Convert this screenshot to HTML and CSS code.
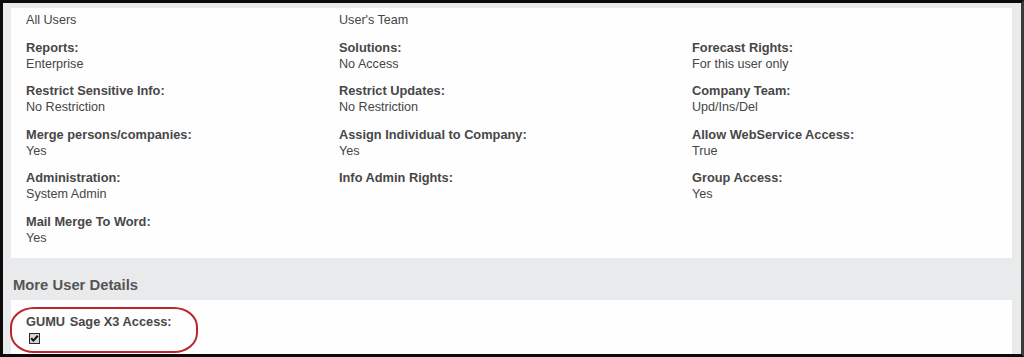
FILE: index.html
```html
<html lang="en">
  <head>
    <meta charset="UTF-8">
    <title>User Details</title>
    <link rel="stylesheet" href="styles.css">
  </head>
  <body>
    <div class="frame">
      <section class="panel">
        <div class="fields">
          <div class="field"><span class="value">All Users</span></div>
          <div class="field"><span class="value">User's Team</span></div>
          <div class="field"></div>

          <div class="field"><span class="label">Reports:</span><span class="value">Enterprise</span></div>
          <div class="field"><span class="label">Solutions:</span><span class="value">No Access</span></div>
          <div class="field"><span class="label">Forecast Rights:</span><span class="value">For this user only</span></div>

          <div class="field"><span class="label">Restrict Sensitive Info:</span><span class="value">No Restriction</span></div>
          <div class="field"><span class="label">Restrict Updates:</span><span class="value">No Restriction</span></div>
          <div class="field"><span class="label">Company Team:</span><span class="value">Upd/Ins/Del</span></div>

          <div class="field"><span class="label">Merge persons/companies:</span><span class="value">Yes</span></div>
          <div class="field"><span class="label">Assign Individual to Company:</span><span class="value">Yes</span></div>
          <div class="field"><span class="label">Allow WebService Access:</span><span class="value">True</span></div>

          <div class="field"><span class="label">Administration:</span><span class="value">System Admin</span></div>
          <div class="field"><span class="label">Info Admin Rights:</span></div>
          <div class="field"><span class="label">Group Access:</span><span class="value">Yes</span></div>

          <div class="field"><span class="label">Mail Merge To Word:</span><span class="value">Yes</span></div>
        </div>
      </section>

      <h2 class="section-title">More User Details</h2>

      <section class="panel panel-more">
        <div class="field">
          <span class="label">GUMU <span class="wide">Sage</span> X3 Access:</span>
          <span class="check">
            <svg width="11" height="11" viewBox="0 0 11 11">
              <rect x="0.5" y="0.5" width="10" height="10" fill="#d4d4d4" stroke="#2a2a2a"/>
              <path d="M2.2 5.2 L4.4 7.6 L8.8 2.8" fill="none" stroke="#111" stroke-width="2"/>
            </svg>
          </span>
        </div>
        <div class="highlight"></div>
      </section>
    </div>
  </body>
</html>
```

FILE: styles.css
```css
* {
  margin: 0;
  padding: 0;
  box-sizing: border-box;
}

body {
  width: 1024px;
  height: 357px;
  overflow: hidden;
  font-family: "Liberation Sans", Arial, sans-serif;
  color: #444;
}

.frame {
  height: 357px;
  display: flex;
  flex-direction: column;
  padding-top: 5px;
  background-color: #e9eaec;
  border-top: 3px solid #0b0b0b;
  border-left: 3px solid #0b0b0b;
  border-bottom: 3px solid #0b0b0b;
  border-right: 3px solid #3a3a3a;
  overflow: hidden;
}

.panel {
  margin: 0 9px 0 8px;
  background-color: #fefefe;
}

.fields {
  display: grid;
  grid-template-columns: 313px 353px 1fr;
  row-gap: 9.5px;
  padding: 4px 0 11px 15px;
}

.field {
  display: flex;
  flex-direction: column;
}

.label {
  font-size: 12.8px;
  font-weight: bold;
  line-height: 17px;
  color: #474747;
}

.label .wide {
  margin-left: 1px;
}

.value {
  font-size: 12.6px;
  line-height: 17px;
  color: #454545;
}

.section-title {
  margin: 18px 0 6px 10px;
  font-size: 14.8px;
  font-weight: bold;
  line-height: 18px;
  color: #555;
}

.panel-more {
  position: relative;
  flex: 1;
  padding: 13.5px 0 0 15px;
}

.check {
  display: flex;
  height: 17px;
  align-items: center;
  padding-left: 3px;
}

.check svg {
  display: block;
}

.highlight {
  position: absolute;
  top: 7px;
  left: -1px;
  width: 188px;
  height: 46px;
  border: 2px solid #b8262e;
  border-radius: 24px / 20px;
}
```
